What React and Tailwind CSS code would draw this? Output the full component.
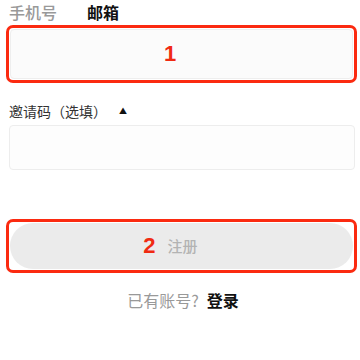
import React, { useState } from "react";

export default function App() {
  const [tab, setTab] = useState("email");

  return (
    <div
      className="w-[360px] h-[360px] bg-white overflow-hidden"
      style={{ fontFamily: '"Noto Sans CJK SC", "Noto Sans", sans-serif' }}
    >
      {/* Tabs */}
      <div className="flex items-center gap-[30px] pl-[9px] h-[24px]">
        <button
          onClick={() => setTab("phone")}
          className={`text-[16px] leading-[20px] ${tab === "phone" ? "text-[#111] font-bold" : "text-[#999] font-medium"}`}
        >
          手机号
        </button>
        <button
          onClick={() => setTab("email")}
          className={`text-[16px] leading-[20px] ${tab === "email" ? "text-[#111] font-bold" : "text-[#999] font-medium"}`}
        >
          邮箱
        </button>
      </div>

      {/* Email input, marked 1 */}
      <div className="ml-[6px] mr-[3px] mt-[1px] border-[3px] border-[#fb2a10] rounded-[7px] p-px">
        <div className="relative h-[50px] bg-[#fbfbfb] border border-[#eeeeee] rounded-[4px]">
          <input className="w-full h-full bg-transparent outline-none px-3 text-sm" />
          <span
            className="absolute left-[153px] top-[10px] text-[#f02a12] font-bold text-[22px] leading-[28px] pointer-events-none"
            style={{ fontFamily: '"Liberation Sans", Arial, sans-serif' }}
          >
            1
          </span>
        </div>
      </div>

      {/* Invite code */}
      <div className="flex items-center gap-[12px] pl-[9px] mt-[18px] h-[20px]">
        <span className="text-[14px] text-[#333] leading-[20px]">邀请码（选填）</span>
        <span className="text-[8px] text-[#111] leading-none">▲</span>
      </div>
      <div className="ml-[9px] mr-[5px] mt-[4px] h-[45px] bg-[#fdfdfd] border border-[#ededed] rounded-[4px]">
        <input className="w-full h-full bg-transparent outline-none px-3 text-sm" />
      </div>

      {/* Register button, marked 2 */}
      <div className="ml-[6px] mr-[3px] mt-[49px] border-[3px] border-[#fb2a10] rounded-[7px] p-px">
        <button className="w-full h-[46px] bg-[#ebebeb] rounded-full flex items-center justify-center gap-[12px] pr-[22px]">
          <span
            className="text-[#f02a12] font-bold text-[22px] leading-[28px]"
            style={{ fontFamily: '"Liberation Sans", Arial, sans-serif' }}
          >
            2
          </span>
          <span className="text-[15px] text-[#b3b3b3] font-medium leading-[20px]">注册</span>
        </button>
      </div>

      {/* Login link */}
      <div className="flex items-center justify-center gap-[8px] mt-[17px] text-[16px] leading-[20px] pl-[6px]">
        <span className="text-[#999]">已有账号?</span>
        <span className="text-[#111] font-bold">登录</span>
      </div>
    </div>
  );
}
